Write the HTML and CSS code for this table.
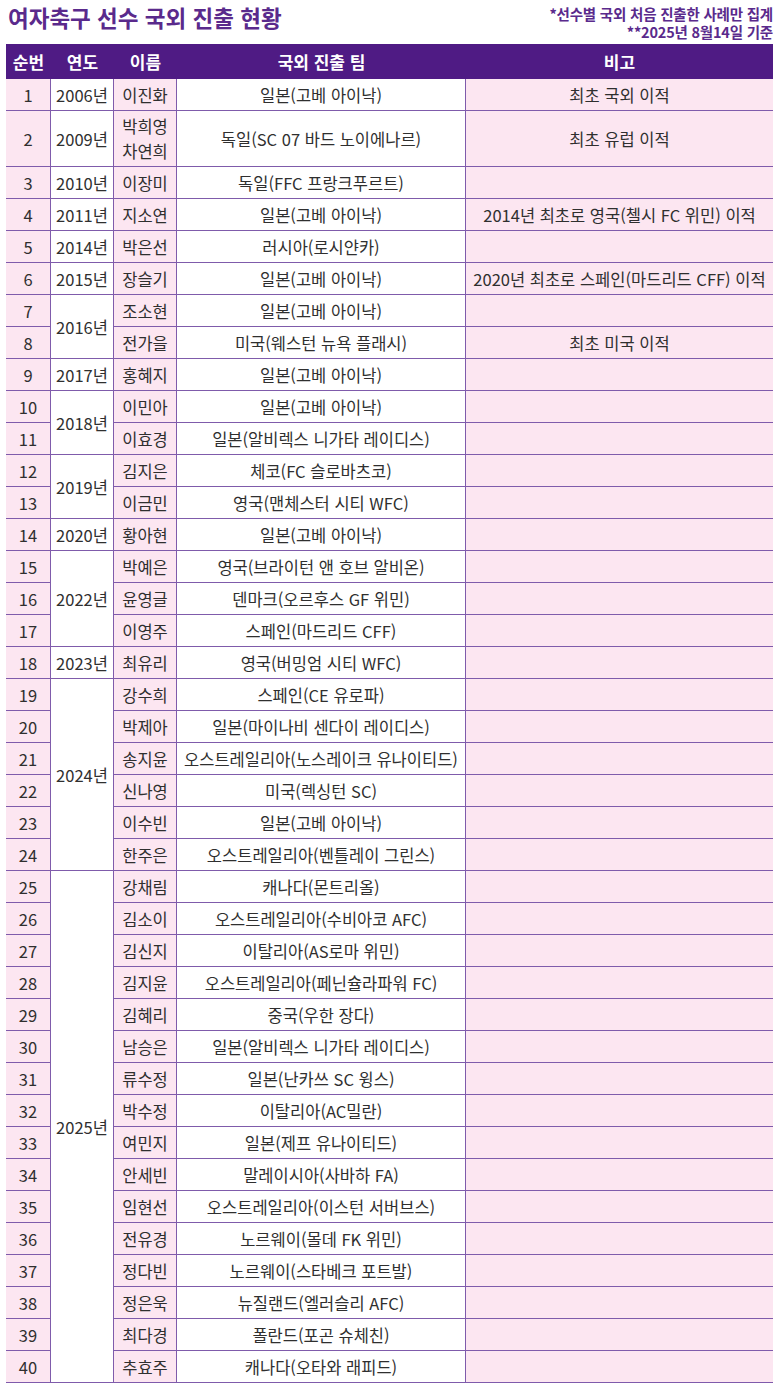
FILE: index.html
```html
<!DOCTYPE html>
<html lang="ko">
<head>
<meta charset="utf-8">
<title>여자축구 선수 국외 진출 현황</title>
<link rel="stylesheet" href="styles.css">
</head>
<body>
<div class="page">
  <header class="top">
    <h1 class="title">여자축구 선수 국외 진출 현황</h1>
    <div class="notes">
      <div>*선수별 국외 처음 진출한 사례만 집계</div>
      <div>**2025년 8월14일 기준</div>
    </div>
  </header>
  <table class="tbl">
    <colgroup>
      <col class="c1"><col class="c2"><col class="c3"><col class="c4"><col class="c5">
    </colgroup>
    <thead>
      <tr><th>순번</th><th>연도</th><th>이름</th><th>국외 진출 팀</th><th>비고</th></tr>
    </thead>
    <tbody>
      <tr><td class="no">1</td><td class="yr">2006년</td><td class="nm">이진화</td><td class="tm">일본(고베 아이낙)</td><td class="rm">최초 국외 이적</td></tr>
      <tr class="tall"><td class="no">2</td><td class="yr">2009년</td><td class="nm two">박희영<br>차연희</td><td class="tm">독일(SC 07 바드 노이에나르)</td><td class="rm">최초 유럽 이적</td></tr>
      <tr><td class="no">3</td><td class="yr">2010년</td><td class="nm">이장미</td><td class="tm">독일(FFC 프랑크푸르트)</td><td class="rm"></td></tr>
      <tr><td class="no">4</td><td class="yr">2011년</td><td class="nm">지소연</td><td class="tm">일본(고베 아이낙)</td><td class="rm">2014년 최초로 영국(첼시 FC 위민) 이적</td></tr>
      <tr><td class="no">5</td><td class="yr">2014년</td><td class="nm">박은선</td><td class="tm">러시아(로시얀카)</td><td class="rm"></td></tr>
      <tr><td class="no">6</td><td class="yr">2015년</td><td class="nm">장슬기</td><td class="tm">일본(고베 아이낙)</td><td class="rm">2020년 최초로 스페인(마드리드 CFF) 이적</td></tr>
      <tr><td class="no">7</td><td class="yr" rowspan="2">2016년</td><td class="nm">조소현</td><td class="tm">일본(고베 아이낙)</td><td class="rm"></td></tr>
      <tr><td class="no">8</td><td class="nm">전가을</td><td class="tm">미국(웨스턴 뉴욕 플래시)</td><td class="rm">최초 미국 이적</td></tr>
      <tr><td class="no">9</td><td class="yr">2017년</td><td class="nm">홍혜지</td><td class="tm">일본(고베 아이낙)</td><td class="rm"></td></tr>
      <tr><td class="no">10</td><td class="yr" rowspan="2">2018년</td><td class="nm">이민아</td><td class="tm">일본(고베 아이낙)</td><td class="rm"></td></tr>
      <tr><td class="no">11</td><td class="nm">이효경</td><td class="tm">일본(알비렉스 니가타 레이디스)</td><td class="rm"></td></tr>
      <tr><td class="no">12</td><td class="yr" rowspan="2">2019년</td><td class="nm">김지은</td><td class="tm">체코(FC 슬로바츠코)</td><td class="rm"></td></tr>
      <tr><td class="no">13</td><td class="nm">이금민</td><td class="tm">영국(맨체스터 시티 WFC)</td><td class="rm"></td></tr>
      <tr><td class="no">14</td><td class="yr">2020년</td><td class="nm">황아현</td><td class="tm">일본(고베 아이낙)</td><td class="rm"></td></tr>
      <tr><td class="no">15</td><td class="yr" rowspan="3">2022년</td><td class="nm">박예은</td><td class="tm">영국(브라이턴 앤 호브 알비온)</td><td class="rm"></td></tr>
      <tr><td class="no">16</td><td class="nm">윤영글</td><td class="tm">덴마크(오르후스 GF 위민)</td><td class="rm"></td></tr>
      <tr><td class="no">17</td><td class="nm">이영주</td><td class="tm">스페인(마드리드 CFF)</td><td class="rm"></td></tr>
      <tr><td class="no">18</td><td class="yr">2023년</td><td class="nm">최유리</td><td class="tm">영국(버밍엄 시티 WFC)</td><td class="rm"></td></tr>
      <tr><td class="no">19</td><td class="yr" rowspan="6">2024년</td><td class="nm">강수희</td><td class="tm">스페인(CE 유로파)</td><td class="rm"></td></tr>
      <tr><td class="no">20</td><td class="nm">박제아</td><td class="tm">일본(마이나비 센다이 레이디스)</td><td class="rm"></td></tr>
      <tr><td class="no">21</td><td class="nm">송지윤</td><td class="tm">오스트레일리아(노스레이크 유나이티드)</td><td class="rm"></td></tr>
      <tr><td class="no">22</td><td class="nm">신나영</td><td class="tm">미국(렉싱턴 SC)</td><td class="rm"></td></tr>
      <tr><td class="no">23</td><td class="nm">이수빈</td><td class="tm">일본(고베 아이낙)</td><td class="rm"></td></tr>
      <tr><td class="no">24</td><td class="nm">한주은</td><td class="tm">오스트레일리아(벤틀레이 그린스)</td><td class="rm"></td></tr>
      <tr><td class="no">25</td><td class="yr" rowspan="16">2025년</td><td class="nm">강채림</td><td class="tm">캐나다(몬트리올)</td><td class="rm"></td></tr>
      <tr><td class="no">26</td><td class="nm">김소이</td><td class="tm">오스트레일리아(수비아코 AFC)</td><td class="rm"></td></tr>
      <tr><td class="no">27</td><td class="nm">김신지</td><td class="tm">이탈리아(AS로마 위민)</td><td class="rm"></td></tr>
      <tr><td class="no">28</td><td class="nm">김지윤</td><td class="tm">오스트레일리아(페닌슐라파워 FC)</td><td class="rm"></td></tr>
      <tr><td class="no">29</td><td class="nm">김혜리</td><td class="tm">중국(우한 장다)</td><td class="rm"></td></tr>
      <tr><td class="no">30</td><td class="nm">남승은</td><td class="tm">일본(알비렉스 니가타 레이디스)</td><td class="rm"></td></tr>
      <tr><td class="no">31</td><td class="nm">류수정</td><td class="tm">일본(난카쓰 SC 윙스)</td><td class="rm"></td></tr>
      <tr><td class="no">32</td><td class="nm">박수정</td><td class="tm">이탈리아(AC밀란)</td><td class="rm"></td></tr>
      <tr><td class="no">33</td><td class="nm">여민지</td><td class="tm">일본(제프 유나이티드)</td><td class="rm"></td></tr>
      <tr><td class="no">34</td><td class="nm">안세빈</td><td class="tm">말레이시아(사바하 FA)</td><td class="rm"></td></tr>
      <tr><td class="no">35</td><td class="nm">임현선</td><td class="tm">오스트레일리아(이스턴 서버브스)</td><td class="rm"></td></tr>
      <tr><td class="no">36</td><td class="nm">전유경</td><td class="tm">노르웨이(몰데 FK 위민)</td><td class="rm"></td></tr>
      <tr><td class="no">37</td><td class="nm">정다빈</td><td class="tm">노르웨이(스타베크 포트발)</td><td class="rm"></td></tr>
      <tr><td class="no">38</td><td class="nm">정은욱</td><td class="tm">뉴질랜드(엘러슬리 AFC)</td><td class="rm"></td></tr>
      <tr><td class="no">39</td><td class="nm">최다경</td><td class="tm">폴란드(포곤 슈체친)</td><td class="rm"></td></tr>
      <tr><td class="no">40</td><td class="nm">추효주</td><td class="tm">캐나다(오타와 래피드)</td><td class="rm"></td></tr>
    </tbody>
  </table>
</div>
</body>
</html>
```

FILE: styles.css
```css
* { box-sizing: border-box; }
html, body { margin: 0; padding: 0; background: #ffffff; }
body {
  font-family: "Noto Sans CJK KR", "Noto Sans", sans-serif;
  color: #2f2f2f;
}
.page {
  width: 780px;
  padding: 0 7px 0 6px;
}
.top {
  height: 44px;
  display: flex;
  justify-content: space-between;
  align-items: flex-start;
}
.title {
  margin: 2px 0 0 2px;
  font-size: 22.5px;
  line-height: 30px;
  font-weight: 700;
  color: #5a2a8c;
  letter-spacing: 0;
}
.notes {
  padding-top: 5px;
  text-align: right;
  font-size: 14.5px;
  line-height: 18px;
  font-weight: 700;
  color: #5a2a8c;
  letter-spacing: -0.2px;
}
.tbl {
  width: 767px;
  border-collapse: separate;
  border-spacing: 0;
  table-layout: fixed;
}
.c1 { width: 45px; }
.c2 { width: 63px; }
.c3 { width: 63px; }
.c4 { width: 289px; }
.c5 { width: 307px; }
.tbl th {
  height: 35px;
  padding: 0;
  background: #4f1b84;
  color: #ffffff;
  font-size: 17px;
  font-weight: 700;
  text-align: center;
  vertical-align: middle;
}
.tbl tr { height: 32px; }
.tbl tr.tall { height: 56px; }
.tbl td {
  padding: 0;
  text-align: center;
  vertical-align: middle;
  font-size: 16.5px;
  line-height: 22px;
  letter-spacing: 0;
  border-bottom: 1.5px solid #7f5bab;
  border-right: 1.5px solid #7f5bab;
  white-space: nowrap;
}
.tbl td.two { line-height: 25px; }
.tbl td.no, .tbl td.nm, .tbl td.rm { background: #fce6f1; }
.tbl td.yr, .tbl td.tm { background: #ffffff; }
.tbl td.rm { border-right: none; }
```
